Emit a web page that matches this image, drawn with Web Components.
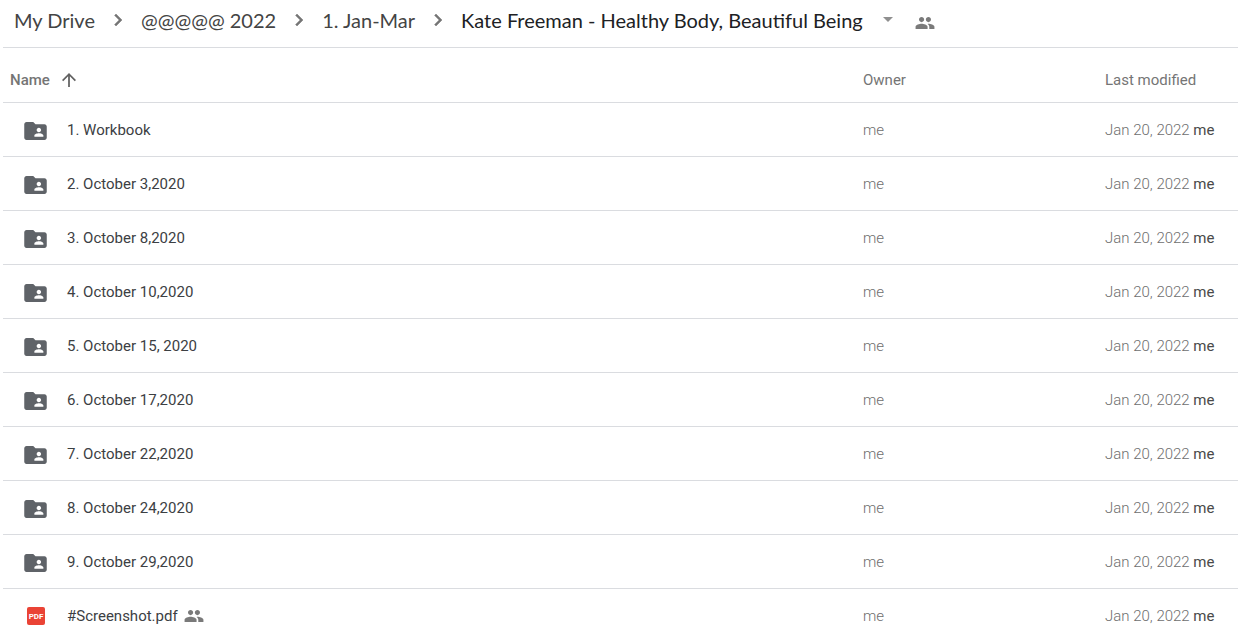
<!DOCTYPE html>
<html lang="en">
<head>
<meta charset="utf-8">
<title>Kate Freeman - Healthy Body, Beautiful Being</title>
<style>
html { scrollbar-width: none; }
body { margin: 0; background: #fff; color: #3c4043; font-family: Roboto, "Liberation Sans", sans-serif; }
</style>
</head>
<body>
<drive-page>
  <drive-path slot="path">
    <path-crumb>My Drive</path-crumb>
    <path-crumb>@@@@@ 2022</path-crumb>
    <path-crumb>1. Jan-Mar</path-crumb>
    <path-crumb current>Kate Freeman - Healthy Body, Beautiful Being</path-crumb>
  </drive-path>
  <file-list></file-list>
</drive-page>
<script>
const icons = {
  chevron: ['7 5 10 14', '<path d="M10 6 8.59 7.41 13.17 12l-4.58 4.59L10 18l6-6z" stroke="currentColor" stroke-width=".5"/>'],
  up: ['4 4 16 16', '<path d="M4 12l1.41 1.41L11 7.83V20h2V7.83l5.58 5.59L20 12l-8-8z"/>'],
  down: ['0 0 10 5', '<path d="M0 0h10L5 5z"/>'],
  people: ['1 5 22 14', '<path d="M16 11c1.66 0 2.99-1.34 2.99-3S17.66 5 16 5s-3 1.34-3 3 1.34 3 3 3zm-8 0c1.66 0 2.99-1.34 2.99-3S9.66 5 8 5 5 6.34 5 8s1.34 3 3 3zm0 2c-2.33 0-7 1.17-7 3.5V19h14v-2.5c0-2.33-4.67-3.5-7-3.5zm8 0c-.29 0-.62.02-.97.05 1.16.84 1.97 1.97 1.97 3.45V19h6v-2.5c0-2.33-4.67-3.5-7-3.5z"/>'],
  folder: ['2 4 20 16', '<path d="M20 6h-8l-2-2H4c-1.1 0-2 .9-2 2v12c0 1.1.9 2 2 2h16c1.1 0 2-.9 2-2V8c0-1.1-.9-2-2-2zm-5 3c1.1 0 2 .9 2 2s-.9 2-2 2-2-.9-2-2 .9-2 2-2zm4 8h-8v-1c0-1.33 2.67-2 4-2s4 .67 4 2z"/>'],
  pdf: ['0 0 18 18', '<rect width="18" height="18" rx="2" fill="#ea4335"/><text x="9" y="12" text-anchor="middle" font-family="Roboto, sans-serif" font-size="8" font-weight="700" fill="#fff">PDF</text>']
};

function attach(host, html) {
  const t = document.createElement('template');
  t.innerHTML = html;
  host.attachShadow({ mode: 'open' }).append(t.content.cloneNode(true));
}

customElements.define('drive-icon', class extends HTMLElement {
  constructor() { super(); }
  connectedCallback() {
    if (this.shadowRoot) return;
    const [box, art] = icons[this.getAttribute('name')];
    attach(this, `<style>:host { display: inline-block; flex: none; } svg { display: block; width: 100%; height: 100%; fill: currentColor; }</style>
      <svg viewBox="${box}" aria-hidden="true">${art}</svg>`);
  }
});

customElements.define('drive-page', class extends HTMLElement {
  constructor() {
    super();
    attach(this, `<style>
      :host { display: block; padding-left: 3px; }
      header { border-bottom: 1px solid #dadce0; }
    </style>
    <header><slot name="path"></slot></header>
    <main><slot></slot></main>`);
  }
});

customElements.define('drive-path', class extends HTMLElement {
  constructor() {
    super();
    attach(this, `<style>
      :host { display: block; }
      nav { display: flex; align-items: center; height: 39px; padding: 0 0 8px 11px; }
      button { display: flex; border: 0; padding: 6px 0 0; margin-left: 22px; background: none; color: #7a7a7a; }
      drive-icon { width: 20px; height: 12px; }
    </style>
    <nav aria-label="Folder path"><slot></slot><button aria-label="Manage people"><drive-icon name="people"></drive-icon></button></nav>`);
  }
});

customElements.define('path-crumb', class extends HTMLElement {
  constructor() { super(); }
  connectedCallback() {
    if (this.shadowRoot) return;
    const current = this.hasAttribute('current');
    attach(this, `<style>
      :host { display: flex; align-items: center; flex: none; font: 20px/24px Lato, Roboto, sans-serif; }
      a, button { color: #444; text-decoration: none; white-space: nowrap; font: inherit; }
      button { display: flex; align-items: center; gap: 20px; border: 0; padding: 0; background: none; color: #202124; }
      .next { width: 10px; height: 14px; margin: 0 18px; color: #757575; }
      .menu { width: 10px; height: 5px; color: #8f8f8f; }
    </style>` + (current
      ? '<button aria-haspopup="menu"><slot></slot><drive-icon class="menu" name="down"></drive-icon></button>'
      : '<a href="#"><slot></slot></a><drive-icon class="next" name="chevron"></drive-icon>'));
  }
});

const files = ['1. Workbook', '2. October 3,2020', '3. October 8,2020', '4. October 10,2020', '5. October 15, 2020',
  '6. October 17,2020', '7. October 22,2020', '8. October 24,2020', '9. October 29,2020', '#Screenshot.pdf'];

customElements.define('file-list', class extends HTMLElement {
  constructor() {
    super();
    const rows = files.map(name => {
      const pdf = name.endsWith('.pdf');
      return `<tr><td><div class="file"><span class="type"><drive-icon class="${pdf ? 'pdf' : 'folder'}" name="${pdf ? 'pdf' : 'folder'}"></drive-icon></span><span>${name}</span>${pdf ? '<drive-icon class="shared" name="people"></drive-icon>' : ''}</div></td><td class="light">me</td><td class="light">Jan 20, 2022 <span class="by">me</span></td></tr>`;
    }).join('');
    attach(this, `<style>
      :host { display: block; }
      table { width: 100%; table-layout: fixed; border-collapse: separate; border-spacing: 0; font-size: 15px; line-height: 20px; }
      .owner { width: 242px; }
      .modified { width: 133px; }
      th, td { box-sizing: border-box; height: 54px; padding: 0; border-bottom: 1px solid #dadce0; text-align: left; white-space: nowrap; }
      th { height: 55px; padding-top: 10px; color: #757575; font-weight: 400; }
      th:first-child { padding-left: 7px; font-weight: 500; }
      .sort { display: flex; align-items: center; gap: 12px; padding: 0; border: 0; background: none; color: inherit; font: inherit; }
      .sort drive-icon { width: 14px; height: 14px; color: #616161; }
      .file { display: flex; align-items: center; padding-left: 21px; }
      .type { display: flex; justify-content: center; width: 24px; margin-right: 19px; }
      .folder { width: 23px; height: 18px; padding: 2px 1px 0 0; color: #5f6368; }
      .pdf { width: 18px; height: 18px; }
      .shared { width: 20px; height: 12px; margin-left: 6px; color: #7a7a7a; }
      .light { color: #6e6e6e; font-weight: 300; }
      .by { color: #4a4a4a; font-weight: 400; }
    </style>
    <table>
      <colgroup><col><col class="owner"><col class="modified"></colgroup>
      <thead><tr><th scope="col" aria-sort="ascending"><button class="sort">Name<drive-icon name="up"></drive-icon></button></th><th scope="col">Owner</th><th scope="col">Last modified</th></tr></thead>
      <tbody>${rows}</tbody>
    </table>`);
  }
});
</script>
</body>
</html>
